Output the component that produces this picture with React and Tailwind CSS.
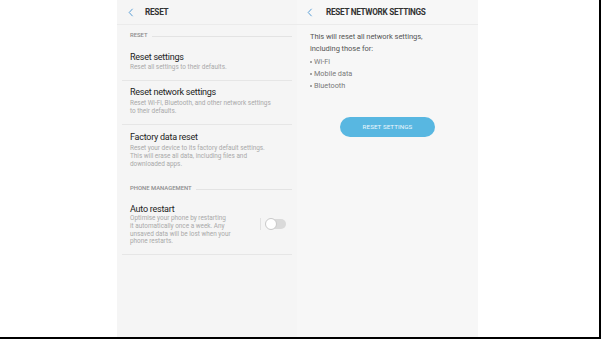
import React from "react";

function Chevron() {
  return (
    <svg width="6" height="9" viewBox="0 0 6 9" className="shrink-0">
      <path d="M4.6 0.8 L1.2 4.5 L4.6 8.2" fill="none" stroke="#5b9fd6" strokeWidth="1" />
    </svg>
  );
}

function SectionLabel({ children }) {
  return (
    <div className="h-[22px] mx-[5px] pl-[8px] flex items-center gap-[4px]">
      <span className="text-[5.9px] font-medium text-[#8c8c8c] whitespace-nowrap leading-none">{children}</span>
      <div className="flex-1 h-px bg-[#e3e3e3]" />
    </div>
  );
}

function Title({ children }) {
  return (
    <div className="text-[9px] tracking-[-0.25px] leading-[11px] text-[#222] whitespace-nowrap">{children}</div>
  );
}

function Sub({ children, className = "" }) {
  return (
    <div className={"text-[6.4px] leading-[8px] text-[#a9a9a9] whitespace-nowrap " + className}>{children}</div>
  );
}

function LeftPanel() {
  return (
    <div className="w-[180px] h-full bg-[#f5f5f5] flex flex-col">
      <div className="h-[25px] border-b border-[#ebebeb] flex items-center pl-[11px]">
        <Chevron />
        <span className="ml-[11px] text-[8.2px] font-bold tracking-[-0.25px] text-[#333] leading-none">RESET</span>
      </div>
      <SectionLabel>RESET</SectionLabel>
      <div className="h-[34px] mx-[5px] pl-[8px] pt-[5px] border-b border-[#e6e6e6]">
        <Title>Reset settings</Title>
        <Sub>Reset all settings to their defaults.</Sub>
      </div>
      <div className="h-[44px] mx-[5px] pl-[8px] pt-[6px] border-b border-[#e6e6e6]">
        <Title>Reset network settings</Title>
        <Sub className="mt-[1px]">
          Reset Wi-Fi, Bluetooth, and other network settings
          <br />
          to their defaults.
        </Sub>
      </div>
      <div className="h-[53px] mx-[5px] pl-[8px] pt-[7px]">
        <Title>Factory data reset</Title>
        <Sub className="mt-[1px]">
          Reset your device to its factory default settings.
          <br />
          This will erase all data, including files and
          <br />
          downloaded apps.
        </Sub>
      </div>
      <SectionLabel>PHONE MANAGEMENT</SectionLabel>
      <div className="h-[55px] mx-[5px] pl-[8px] pr-[6px] pt-[4px] border-b border-[#e6e6e6] flex">
        <div className="flex-1">
          <Title>Auto restart</Title>
          <div className="text-[6.4px] leading-[7.8px] text-[#a9a9a9] whitespace-nowrap">
            Optimise your phone by restarting
            <br />
            it automatically once a week. Any
            <br />
            unsaved data will be lost when your
            <br />
            phone restarts.
          </div>
        </div>
        <div className="self-start mt-[14px] flex items-center gap-[5px]">
          <div className="w-px h-[12px] bg-[#e2e2e2]" />
          <div className="relative w-[20px] h-[10px] rounded-full bg-[#dadada]">
            <div className="absolute left-[-1px] top-[-1px] w-[12px] h-[12px] rounded-full bg-white border border-[#c9c9c9]" />
          </div>
        </div>
      </div>
    </div>
  );
}

function Bullet({ children }) {
  return (
    <div className="flex items-center h-[12px]">
      <div className="w-[1.5px] h-[1.5px] rounded-full bg-[#8a8a8a] mr-[2.5px]" />
      <span className="text-[7.3px] text-[#7a7a7a] leading-none">{children}</span>
    </div>
  );
}

function RightPanel() {
  return (
    <div className="w-[181px] h-full bg-[#f7f7f7] flex flex-col">
      <div className="h-[25px] border-b border-[#ebebeb] flex items-center pl-[10px]">
        <Chevron />
        <span className="ml-[13px] text-[8.2px] font-bold tracking-[-0.3px] text-[#333] leading-none whitespace-nowrap">
          RESET NETWORK SETTINGS
        </span>
      </div>
      <div className="pl-[13px] pt-[6px]">
        <div className="text-[7.5px] tracking-[-0.05px] leading-[12px] text-[#555] whitespace-nowrap">
          This will reset all network settings,
          <br />
          including those for:
        </div>
        <div className="mt-[1px]">
          <Bullet>Wi-Fi</Bullet>
          <Bullet>Mobile data</Bullet>
          <Bullet>Bluetooth</Bullet>
        </div>
      </div>
      <div className="mx-auto mt-[25px] w-[95px] h-[20px] rounded-full bg-[#58b7e1] flex items-center justify-center">
        <span className="text-[6.2px] text-[#eef8fd] leading-none tracking-[0.1px]">RESET SETTINGS</span>
      </div>
    </div>
  );
}

export default function App() {
  return (
    <div className="w-[601px] h-[339px] bg-white border-r-2 border-b-2 border-black flex pl-[117px] antialiased [font-family:Roboto,'Noto_Sans',sans-serif]">
      <LeftPanel />
      <RightPanel />
    </div>
  );
}
